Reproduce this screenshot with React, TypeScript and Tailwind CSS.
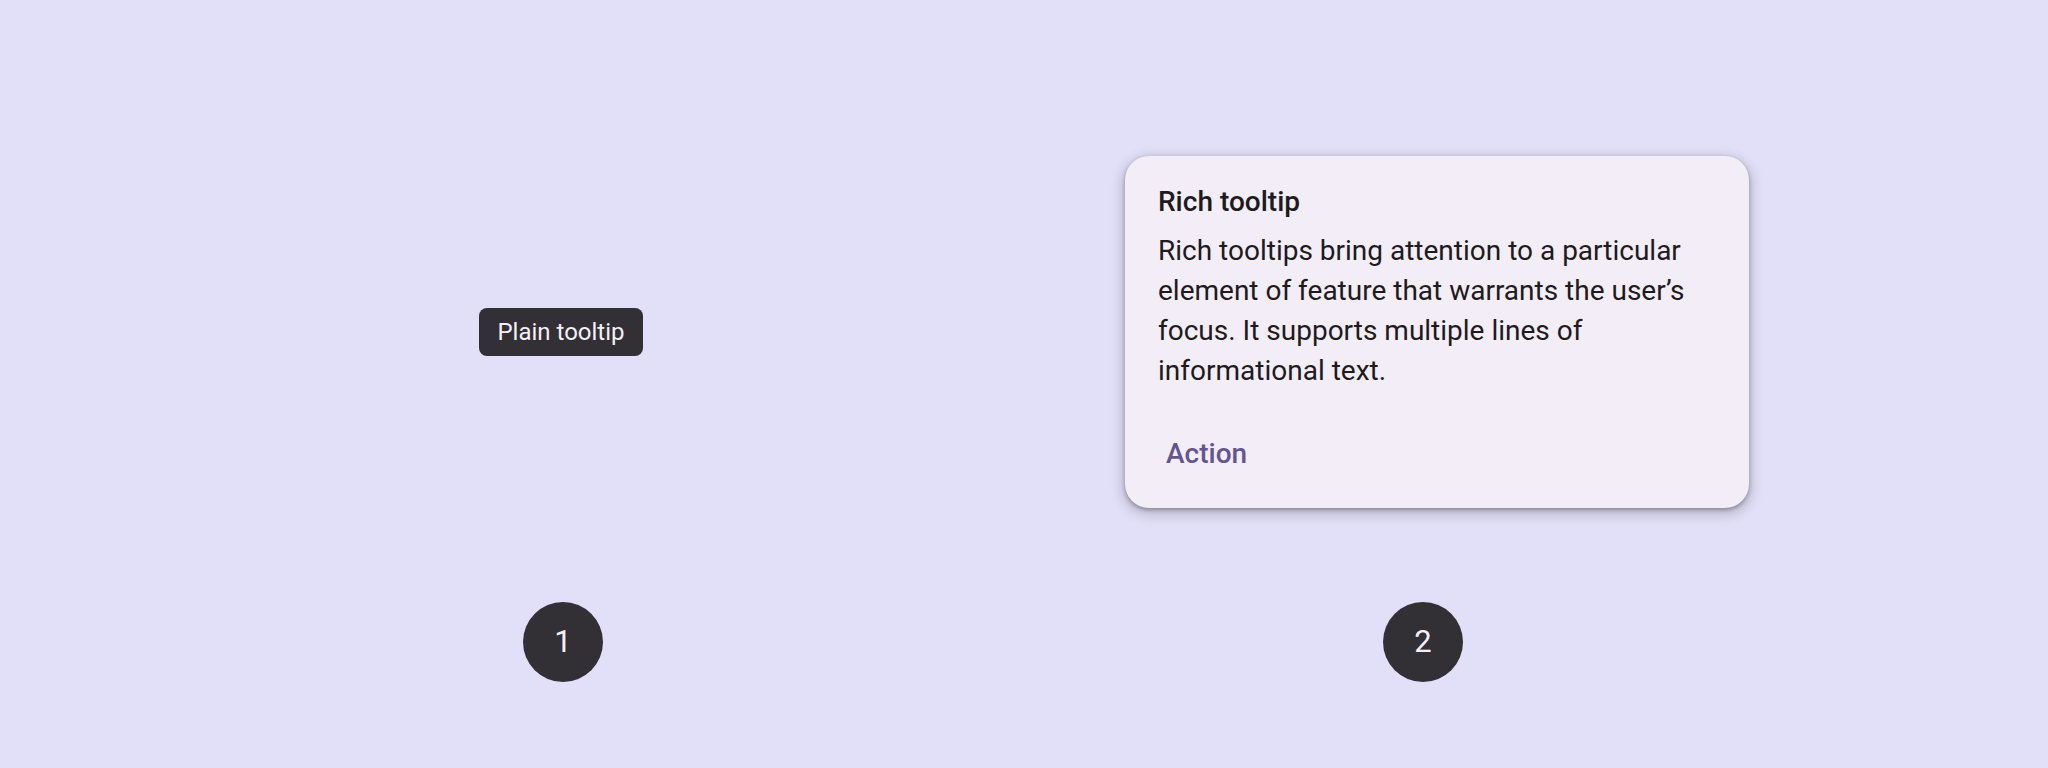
const font = { fontFamily: "Roboto, 'Noto Sans', sans-serif" };

function PlainTooltip() {
  return (
    <div className="ml-[16px] flex h-[48px] w-[164px] items-center justify-center rounded-[8px] bg-[#322F35] text-[24px] leading-[32px] text-[#F5EFF7]">
      Plain tooltip
    </div>
  );
}

function RichTooltip() {
  return (
    <div className="flex w-[624px] flex-col rounded-[24px] bg-[#F3EDF7] px-[33px] pt-[26px] pb-[14px] shadow-[0_2px_4px_rgba(0,0,0,0.3),0_4px_12px_4px_rgba(0,0,0,0.15)]">
      <div className="text-[28px] font-medium leading-[40px] text-[#1D1B20]">Rich tooltip</div>
      <p className="mt-[9px] text-[28px] leading-[40px] text-[#1D1B20]">
        Rich tooltips bring attention to a particular
        <br />
        element of feature that warrants the user’s
        <br />
        focus. It supports multiple lines of
        <br />
        informational text.
      </p>
      <div className="mt-[23px] flex h-[80px] items-center">
        <button className="ml-[8px] text-[28px] font-medium leading-[40px] text-[#65558F]">Action</button>
      </div>
    </div>
  );
}

function Badge({ n }: { n: number }) {
  return (
    <div className="flex h-[80px] w-[80px] items-center justify-center rounded-full bg-[#322F35] text-[31px] text-[#F5EFF7]">
      {n}
    </div>
  );
}

export default function App() {
  return (
    <div className="flex h-[768px] w-full bg-[#E2E0F8] pl-[463px]" style={font}>
      {/* Plain */}
      <div className="flex w-[200px] flex-col pt-[308px]">
        <PlainTooltip />
        <div className="ml-[60px] mt-[246px]">
          <Badge n={1} />
        </div>
      </div>

      {/* Rich */}
      <div className="ml-[462px] flex flex-col pt-[156px]">
        <RichTooltip />
        <div className="ml-[258px] mt-[94px]">
          <Badge n={2} />
        </div>
      </div>
    </div>
  );
}
